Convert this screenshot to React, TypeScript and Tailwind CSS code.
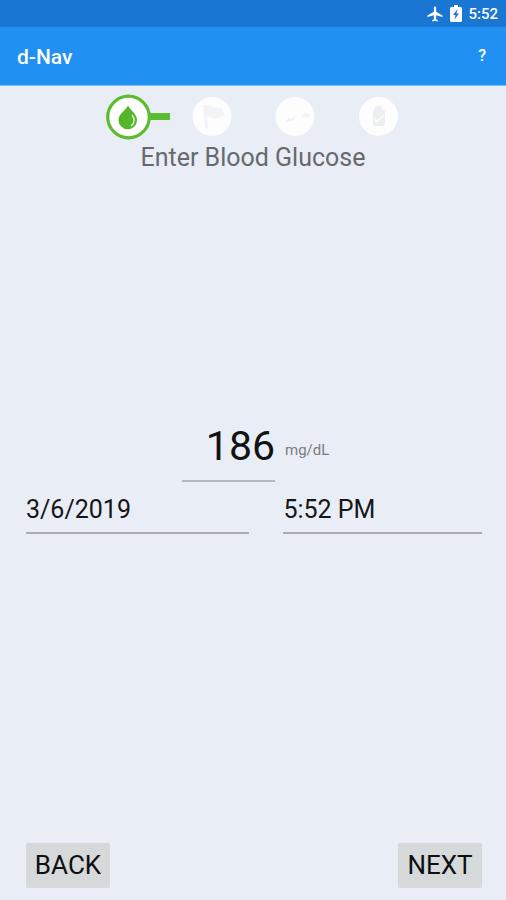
import React from "react";

const underline =
  "w-full border-b-2 border-[#a9abb0] bg-transparent pb-0.5 text-[#151618] outline-none";

function StatusBar() {
  return (
    <div className="flex h-[27px] items-center justify-end bg-[#1976d2] pr-2 text-white">
      <svg className="mr-1.5 size-[18px]" viewBox="0 0 24 24" fill="currentColor" aria-label="Airplane mode">
        <path d="M22 16v-2l-8.500-5V3.500C13.500 2.670 12.830 2 12 2s-1.500.670-1.500 1.500V9L2 14v2l8.500-2.500V19L8 20.500V22l4-1 4 1v-1.500L13.500 19v-5.500L22 16z" />
      </svg>
      <svg className="mr-1.5 h-[17px] w-3" viewBox="0 0 12 17" aria-label="Battery charging">
        <path fill="currentColor" d="M4 0h4v2h2.500Q12 2 12 3.500v12Q12 17 10.500 17h-9Q0 17 0 15.500v-12Q0 2 1.500 2H4z" />
        <path fill="#1976d2" d="M7.500 4L3 10h2.500L4.500 14.500 9 8.500H6.500z" />
      </svg>
      <span className="pt-0.5 text-[15px] leading-none font-medium">5:52</span>
    </div>
  );
}

function Steps() {
  return (
    <ol className="flex h-[46px] justify-center">
      <li className="w-[83px]" aria-current="step" aria-label="Blood glucose">
        <svg className="h-[46px] w-[83px]" viewBox="0 0 83 46">
          <rect x="62" y="19" width="21" height="7" fill="#5dbb2f" />
          <circle cx="41.500" cy="23" r="20.800" fill="#fff" stroke="#5dbb2f" strokeWidth="3.200" />
          <path fill="#55b52b" d="M41 11.500C44 17 50 20 50 26a9 9 0 0 1-18.500 0C31.500 20 38 17 41 11.500z" />
          <path fill="none" stroke="#e8f6e0" strokeWidth="1.400" d="M45 21C48 24.500 48 29 44 32" />
        </svg>
      </li>
      <li className="w-[83px]" aria-label="Flag">
        <svg className="h-[46px] w-[83px]" viewBox="0 0 83 46">
          <circle cx="42" cy="22.500" r="19.500" fill="#fdfdfe" />
          <path fill="#f3f4f6" d="M33 11.500l3-1 9 3h7l3 8-10 3-8-2 1 12h-3z" />
        </svg>
      </li>
      <li className="w-[83px]" aria-label="Activity">
        <svg className="h-[46px] w-[83px]" viewBox="0 0 83 46">
          <circle cx="42" cy="22.500" r="19.500" fill="#fdfdfe" />
          <path fill="#f0f1f3" d="M32 27l4-3 2 1 5-2-3 4-6 1z" />
          <path fill="#f3f4f6" d="M49 22l3-3 4 0 1 3-3 2z" />
        </svg>
      </li>
      <li className="w-[83px]" aria-label="Insulin">
        <svg className="h-[46px] w-[83px]" viewBox="0 0 83 46">
          <circle cx="42.500" cy="22.500" r="19.500" fill="#fdfdfe" />
          <path fill="#eceef0" d="M39 13q4-3 7 0v2l3 2v13q0 2-2 2h-8q-2 0-2-2V17l2-2z" />
          <path fill="none" stroke="#fdfdfe" strokeWidth="1.300" d="M39 25l2 3 7-7" />
        </svg>
      </li>
    </ol>
  );
}

export default function App() {
  return (
    <div className="flex min-h-screen flex-col bg-[#e9edf5] font-['Roboto',sans-serif]">
      <StatusBar />
      <header className="flex h-[59px] items-center justify-between border-b border-[#7cc0fd] bg-[#2190f3] pr-[18px] pl-[17px] text-white">
        <h1 className="pt-0.5 text-[21px] leading-6 font-medium">d-Nav</h1>
        <button type="button" aria-label="Help" className="px-0.5 text-base leading-6 font-medium">
          ?
        </button>
      </header>

      <main className="flex flex-1 flex-col pt-2">
        <Steps />
        <h2 className="text-center text-[25px] leading-9 text-[#67696d]">Enter Blood Glucose</h2>

        <form
          className="flex flex-1 flex-col justify-between"
          onSubmit={(event) => event.preventDefault()}
        >
          <div className="flex flex-1 flex-col justify-center pr-6 pb-16 pl-[26px]">
            <div className="flex items-center pl-[156px]">
              <input
                id="glucose"
                className="h-[60px] w-[93px] border-b-2 border-[#b5b8be] bg-transparent pb-2 text-right text-[41px] text-[#111214] outline-none"
                inputMode="numeric"
                defaultValue="186"
              />
              <label htmlFor="glucose" className="pb-1 pl-2.5 text-[15px] leading-5 text-[#7b7d82]">
                mg/dL
              </label>
            </div>
            <div className="mt-2 flex gap-[34px]">
              <input
                aria-label="Date"
                className={`${underline} h-[44px] min-w-0 flex-[9] text-[25px]`}
                defaultValue="3/6/2019"
              />
              <input
                aria-label="Time"
                className={`${underline} h-[44px] min-w-0 flex-[8] text-[25px]`}
                defaultValue="5:52 PM"
              />
            </div>
          </div>

          <div className="flex justify-between pr-6 pb-3 pl-[26px]">
            <button type="button" className="h-[45px] w-[84px] rounded-xs bg-[#d6d9da] text-[26px] text-[#0e0f10]">
              BACK
            </button>
            <button type="submit" className="h-[45px] w-[84px] rounded-xs bg-[#d6d9da] text-[26px] text-[#0e0f10]">
              NEXT
            </button>
          </div>
        </form>
      </main>
    </div>
  );
}
